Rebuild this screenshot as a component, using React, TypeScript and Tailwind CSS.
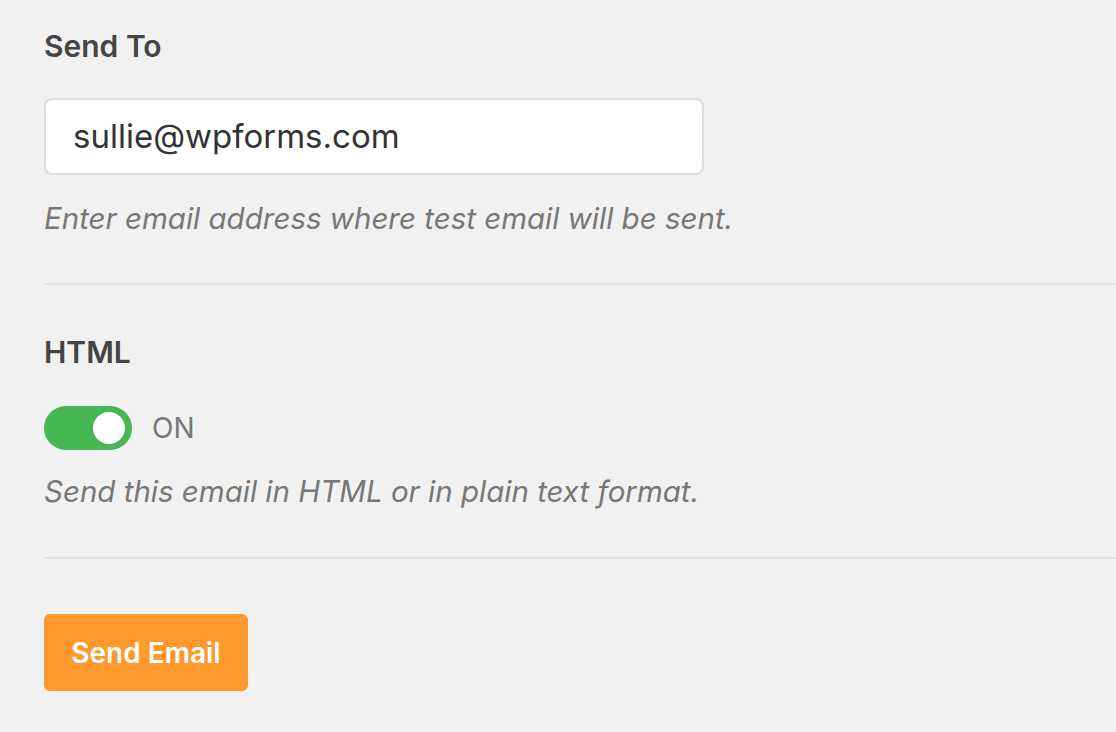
import React from "react";

export default function App() {
  return (
    <div
      className="min-h-screen w-full bg-[#f1f1f1] pl-[44px] pt-[29px]"
      style={{ fontFamily: "Inter, 'Noto Sans', sans-serif" }}
    >
      <section className="border-b-2 border-[#e4e4e4] pb-[48px]">
        <label className="block text-[30px] leading-[34px] font-semibold text-[#444444]">
          Send To
        </label>
        <div className="mt-[35px] flex h-[77px] w-[660px] items-center rounded-[8px] border-2 border-[#dddddd] bg-white px-[27px]">
          <span className="text-[33px] text-[#333333]">sullie@wpforms.com</span>
        </div>
        <p className="mt-[26px] text-[29.5px] leading-[34px] italic text-[#777777]">
          Enter email address where test email will be sent.
        </p>
      </section>

      <section className="border-b-2 border-[#e4e4e4] pt-[50px] pb-[49px]">
        <div className="text-[30px] leading-[34px] font-semibold text-[#444444]">HTML</div>
        <div className="mt-[37px] flex items-center gap-[20px]">
          <div className="flex h-[44px] w-[88px] items-center justify-end rounded-full bg-[#47b752] pr-[7px]">
            <div className="h-[32px] w-[32px] rounded-full bg-white" />
          </div>
          <span className="text-[28px] leading-[34px] text-[#777777]">ON</span>
        </div>
        <p className="mt-[24px] text-[29.5px] leading-[34px] italic text-[#777777]">
          Send this email in HTML or in plain text format.
        </p>
      </section>

      <div className="pt-[55px]">
        <button className="flex h-[77px] w-[204px] items-center justify-center rounded-[6px] bg-[#ff982d] text-[28px] font-semibold text-white">
          Send Email
        </button>
      </div>
    </div>
  );
}
